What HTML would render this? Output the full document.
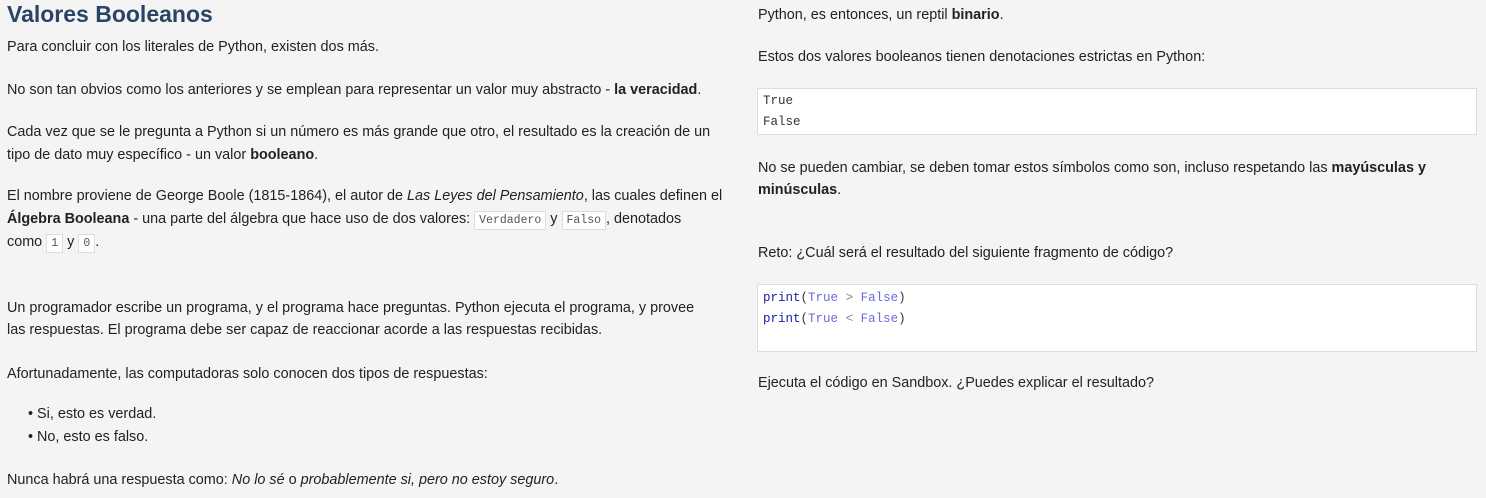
<!DOCTYPE html><html><head><meta charset="utf-8"><style>
body{margin:0;width:1486px;height:498px;background:#f4f4f4;font-family:"Liberation Sans",sans-serif;font-size:14.4px;color:#222;position:relative;overflow:hidden}
.l{position:absolute;white-space:nowrap;line-height:22px}
h1{position:absolute;left:7px;top:0;margin:0;font-size:23px;color:#2b4466;font-weight:bold;line-height:28px}
code{font-family:"Liberation Mono",monospace;font-size:11.5px;background:#fff;border:1px solid #ddd;padding:2px 4px;color:#555}
.box{position:absolute;background:#fff;border:1px solid #ddd;font-family:"Liberation Mono",monospace;font-size:12.5px;line-height:21px;padding:3px 5px;box-sizing:border-box;color:#333}
.k{color:#1a1ab0}.v{color:#6a6ae0}.o{color:#888}
</style></head><body>
<h1>Valores Booleanos</h1>
<div class="l" style="left:7px;top:36px">Para concluir con los literales de Python, existen dos más.</div>
<div class="l" style="left:7px;top:79px">No son tan obvios como los anteriores y se emplean para representar un valor muy abstracto - <b>la veracidad</b>.</div>
<div class="l" style="left:7px;top:121px">Cada vez que se le pregunta a Python si un número es más grande que otro, el resultado es la creación de un</div>
<div class="l" style="left:7px;top:144px">tipo de dato muy específico - un valor <b>booleano</b>.</div>
<div class="l" style="left:7px;top:185px">El nombre proviene de George Boole (1815-1864), el autor de <i>Las Leyes del Pensamiento</i>, las cuales definen el</div>
<div class="l" style="left:7px;top:208px"><b>Álgebra Booleana</b> - una parte del álgebra que hace uso de dos valores: <code>Verdadero</code> y <code>Falso</code>, denotados</div>
<div class="l" style="left:7px;top:231px">como <code>1</code> y <code>0</code>.</div>
<div class="l" style="left:7px;top:297px">Un programador escribe un programa, y el programa hace preguntas. Python ejecuta el programa, y provee</div>
<div class="l" style="left:7px;top:319px">las respuestas. El programa debe ser capaz de reaccionar acorde a las respuestas recibidas.</div>
<div class="l" style="left:7px;top:363px">Afortunadamente, las computadoras solo conocen dos tipos de respuestas:</div>
<div class="l" style="left:28px;top:403px">• Si, esto es verdad.</div>
<div class="l" style="left:28px;top:426px">• No, esto es falso.</div>
<div class="l" style="left:7px;top:469px">Nunca habrá una respuesta como: <i>No lo sé</i> o <i>probablemente si, pero no estoy seguro</i>.</div>

<div class="l" style="left:758px;top:4px">Python, es entonces, un reptil <b>binario</b>.</div>
<div class="l" style="left:758px;top:46px">Estos dos valores booleanos tienen denotaciones estrictas en Python:</div>
<div class="box" style="left:757px;top:88px;width:720px;height:47px;padding-top:2px">True<br>False</div>
<div class="l" style="left:758px;top:157px">No se pueden cambiar, se deben tomar estos símbolos como son, incluso respetando las <b>mayúsculas y</b></div>
<div class="l" style="left:758px;top:179px"><b>minúsculas</b>.</div>
<div class="l" style="left:758px;top:242px">Reto: ¿Cuál será el resultado del siguiente fragmento de código?</div>
<div class="box" style="left:757px;top:284px;width:720px;height:68px;padding-top:3px"><span class="k">print</span>(<span class="v">True</span> <span class="o">&gt;</span> <span class="v">False</span>)<br><span class="k">print</span>(<span class="v">True</span> <span class="o">&lt;</span> <span class="v">False</span>)</div>
<div class="l" style="left:758px;top:372px">Ejecuta el código en Sandbox. ¿Puedes explicar el resultado?</div>
</body></html>
